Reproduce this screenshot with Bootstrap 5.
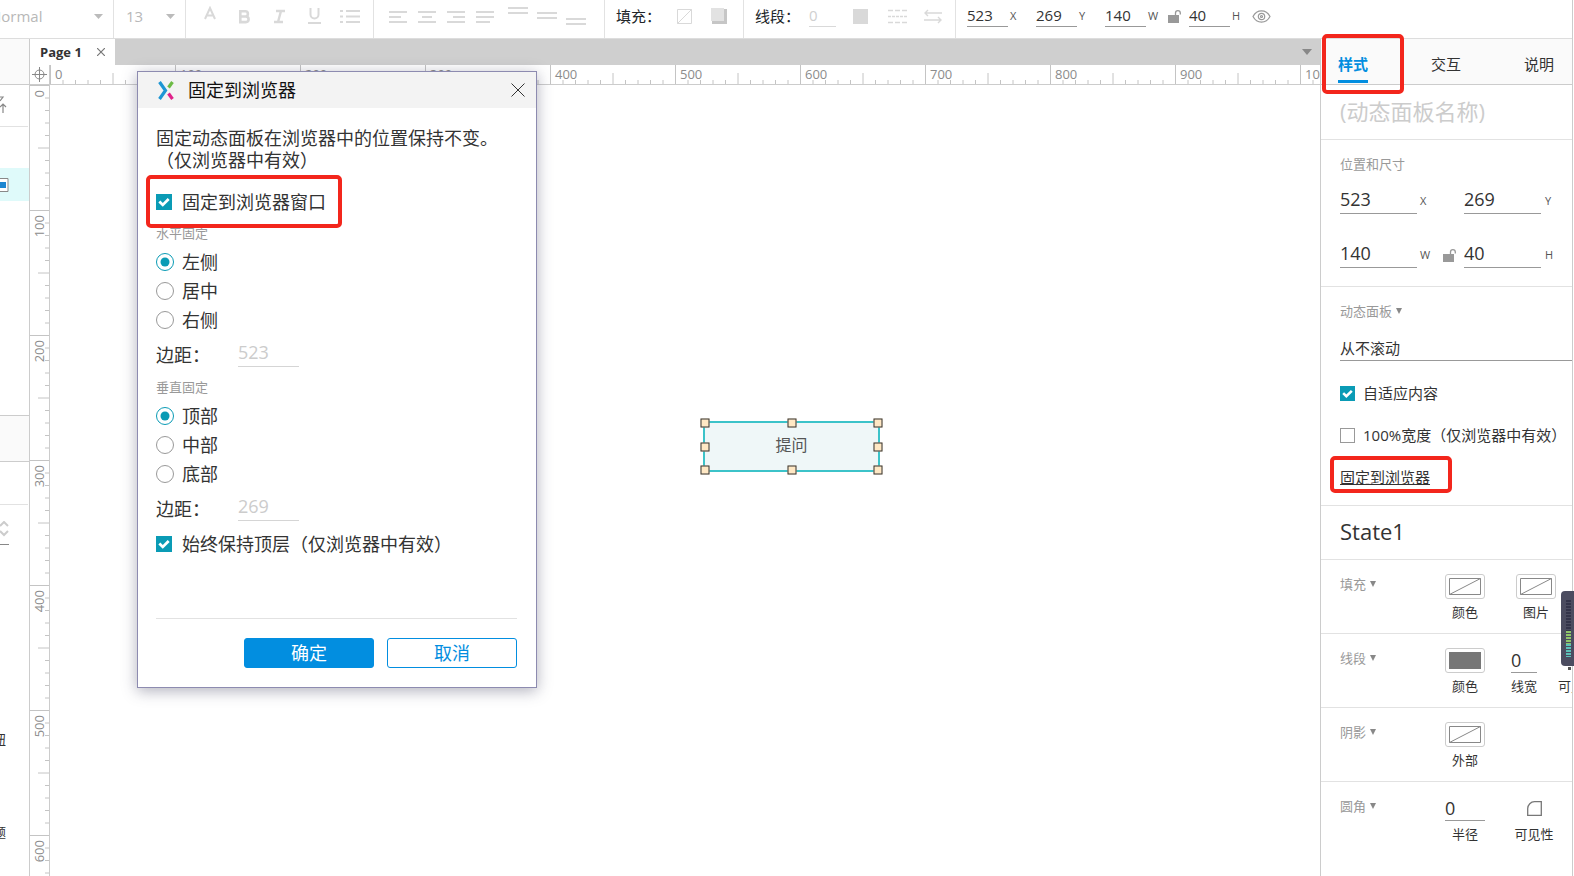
<!DOCTYPE html>
<html lang="zh-CN">
<head>
<meta charset="utf-8">
<meta name="viewport" content="width=device-width, initial-scale=1">
<title>固定到浏览器</title>
<link href="https://cdn.jsdelivr.net/npm/bootstrap@5.3.0/dist/css/bootstrap.min.css" rel="stylesheet">
<script src="https://cdn.jsdelivr.net/npm/bootstrap@5.3.0/dist/js/bootstrap.bundle.min.js" defer></script>
<style>
  :root { --teal: #0a9bb5; --blue: #028ee0; --rule: #e2e2e2; --ink: #333; --red: #f3261c; }
  body { font-family: "Open Sans", "Noto Sans CJK SC", sans-serif; font-size: 15px; line-height: 20px; color: var(--ink); background: #fff; }
  svg { display: block; }
  button.plain { border: 0; background: none; padding: 0; color: inherit; }

  /* toolbar */
  .toolbar { height: 39px; border-bottom: 1px solid #ddd; flex: none; }
  .tool-group { height: 38px; border-right: 1px solid var(--rule); padding-bottom: 6px; }
  .tool-group svg { margin: auto; }
  .dim { color: #d9d9d9; }
  .line-field { border: 0; border-bottom: 1px solid #999; border-radius: 0; background: none; padding: 0; color: var(--ink); min-width: 0; outline: 0; }
  .tool-field { width: 41px; height: 22px; padding-bottom: 2px; }
  .stroke-field { width: 27px; margin: 0 17px 0 9px; color: #d0d0d0; border-color: #d9d9d9; }
  .unit { font-size: 11px; color: #555; }
  .tool-unit { width: 28px; padding-left: 2px; flex: none; }
  .tool-unit.tight { width: 22px; }
  .w-name { width: 114px; padding-right: 10px; }
  .w-size { width: 72px; padding-left: 12px; padding-right: 10px; }
  .w-format { width: 188px; padding-left: 6px; }
  .w-align { width: 231px; padding-left: 9px; }
  .w-fill { width: 139px; padding-left: 11px; }
  .w-line { width: 212px; padding-left: 11px; }
  .w-dims { border: 0; padding-left: 11px; }
  .w-format button { width: 35px; }
  .w-align button { width: 29px; }
  .bare-select { appearance: none; border: 0; background: none; padding: 0; color: #b8b8b8; outline: 0; }
  .font-select { width: 104px; flex: none; }

  /* left strip */
  .strip { width: 30px; border-right: 1px solid #ccc; flex: none; }
  .strip-head { height: 46px; background: #fafafa; border-bottom: 1px solid #ccc; }
  .strip-tools { height: 42px; border-bottom: 1px solid var(--rule); margin-right: 1px; padding-top: 11px; }
  .strip-row { height: 33px; background: #dffafa; margin-top: 41px; padding-top: 10px; }
  .strip-mid { height: 47px; margin-top: 214px; background: #fafafa; border: solid #ccc; border-width: 1px 0; }
  .strip-field { height: 43px; border-bottom: 1px solid var(--rule); margin-right: 1px; }
  .strip-step { width: 9px; height: 40px; padding-top: 16px; border-bottom: 1px solid #888; margin-bottom: 184px; }
  .clipped { width: 6px; height: 20px; margin-bottom: 73px; font-size: 13px; }

  /* page tabs and rulers */
  .tab-bar { height: 26px; background: #cfcfcf; flex: none; }
  .page-tab { width: 85px; padding: 0 10px; background: #fff; font-size: 13px; font-weight: 700; line-height: 24px; }
  .ruler-row { height: 20px; flex: none; }
  .ruler-corner { width: 20px; border: solid #ccc; border-width: 0 1px 1px 0; flex: none; }
  .ruler-x { height: 20px; border-bottom: 1px solid #ccc; }
  .ruler-y { width: 20px; flex: none; border-right: 1px solid #ccc; }
  .ruler-label { font-size: 13px; line-height: 18px; color: #8c8c8c; flex: none; }
  .ruler-x .ruler-label { width: 125px; padding-left: 5px; }
  .ruler-y .ruler-label { height: 125px; padding-top: 5px; display: flex; align-items: flex-start; }
  .ruler-y .ruler-label span { writing-mode: vertical-rl; transform: rotate(180deg); }

  /* widget on the canvas */
  .widget { left: 653px; top: 336px; width: 177px; height: 51px; background: #eff7f8; border: 2px solid #3cc3c9; color: #555; font-size: 16px; padding-bottom: 3px; }
  .handle { width: 9px; height: 9px; background: #ffe8c4; border: 1px solid #333; }

  /* inspector */
  .inspector { width: 252px; flex: none; border-left: 1px solid #ccc; }
  .inspector-tabs { height: 46px; background: #fafafa; border-bottom: 1px solid #ccc; padding: 0 18px 0 17px; }
  .inspector-tabs button { height: 44px; padding-top: 8px; border-bottom: 3px solid transparent; }
  .inspector-tabs button.current { color: var(--blue); font-weight: 700; border-color: var(--blue); }
  .pane { border-bottom: 1px solid var(--rule); padding: 14px 0 18px 19px; }
  .pane-name { height: 55px; padding: 0 0 0 19px; }
  .pane-name input { border: 0; padding: 0; width: 100%; height: 52px; font-size: 22px; outline: 0; }
  .pane-name input::placeholder { color: #ccc; opacity: 1; }
  .pane-state { height: 54px; padding: 0 0 4px 19px; font-size: 22px; }
  .caption { font-size: 13px; color: #999; line-height: 20px; }
  .caret { width: 6px; height: 6px; }
  .field-row { margin-top: 10px; }
  .field-row + .field-row { margin-top: 24px; }
  .size-field { width: 77px; height: 30px; font-size: 18px; }
  .pane .unit { padding-top: 4px; }
  .unit-gap { width: 47px; padding-left: 3px; }
  .scroll-select { width: 100%; height: 30px; margin-top: 10px; padding-top: 4px; appearance: none; }
  .panel-opts { margin-top: 22px; gap: 22px; }
  .prop { min-height: 74px; padding: 14px 0 12px 19px; }
  .prop .caption { width: 105px; flex: none; }
  .cell { font-size: 13px; line-height: 18px; flex: none; }
  .cell-a { width: 40px; }
  .cell-b { width: 50px; }
  .cell-next { margin-left: 26px; }
  .cell-stroke { width: 26px; }
  .cell-rest { width: 14px; }
  .swatch { width: 40px; height: 25px; border: 1px solid #ccc !important; border-radius: 3px; padding: 3px !important; }
  .value-field { height: 25px; font-size: 18px; width: 100%; }
  .edge { width: 2px; flex: none; border-left: 1px solid #ccc; }

  /* check marks */
  .form-check-input { margin: 0; flex: none; border-color: #999; box-shadow: none !important; }
  .form-check-input[type=checkbox] { width: 15px; height: 15px; border-radius: 0; }
  .dialog .form-check-input[type=checkbox] { width: 16px; height: 16px; }
  .form-check-input[type=checkbox]:checked { background-color: var(--teal); border-color: var(--teal); background-image: url("data:image/svg+xml,%3csvg xmlns='http://www.w3.org/2000/svg' viewBox='0 0 15 15'%3e%3cpath fill='none' stroke='%23fff' stroke-width='3' d='M2.500 7l3.700 3.600L12.500 4.400'/%3e%3c/svg%3e"); }
  .form-check-input[type=radio] { width: 18px; height: 18px; }
  .form-check-input[type=radio]:checked { background-color: #fff; border-color: var(--teal); background-image: url("data:image/svg+xml,%3csvg xmlns='http://www.w3.org/2000/svg' viewBox='0 0 16 16'%3e%3ccircle cx='8' cy='8' r='4.500' fill='%230a9bb5'/%3e%3c/svg%3e"); }

  /* red call-out frames */
  .framed { position: relative; }
  .framed::after { content: ""; position: absolute; border: 4px solid var(--red); border-radius: 5px; pointer-events: none; z-index: 3; }
  .frame-tab::after { inset: -5px -36px -14px -16px; }
  .frame-link::after { inset: -11px -22px -6px -10px; }
  .frame-check::after { inset: -16px -16px -15px -10px; }

  /* dialog */
  .dialog { left: 137px; top: 71px; width: 400px; z-index: 5; background: #fff; border: 1px solid #8d8bb0; box-shadow: 0 3px 14px rgba(60, 60, 90, .4); font-size: 18px; line-height: 22px; }
  .dialog-head { height: 36px; background: #f3f3f3; padding: 0 11px 0 20px; gap: 14px; color: #111; }
  .dialog-body { padding: 19px 19px 19px 18px; }
  .dialog-body .caption { font-size: 13px; line-height: 18px; margin: 11px 0 9px; }
  .opt { line-height: 22px; }
  .opt-check { gap: 10px; }
  .opts { gap: 7px; }
  .margin-row { height: 24px; margin-top: 12px; }
  .margin-row label { width: 82px; }
  .margin-field { width: 61px; height: 24px; padding-bottom: 5px; color: #ccc; border-color: #d5d5d5; -webkit-text-fill-color: #ccc; }
  .dialog-foot { margin-top: 63px; padding-top: 19px; border-top: 1px solid var(--rule); gap: 13px; }
  .dialog .btn { width: 130px; height: 30px; padding: 0; font-size: 18px; line-height: 26px; border-radius: 3px; --bs-btn-border-color: var(--blue); }
  .btn-ok { --bs-btn-color: #fff; --bs-btn-bg: var(--blue); }
  .btn-no { --bs-btn-color: var(--blue); --bs-btn-bg: #fff; }

  .meter { right: 0; top: 591px; width: 13px; height: 79px; z-index: 4; }
</style>
</head>
<body class="vh-100 overflow-hidden position-relative d-flex">

<svg width="0" height="0" class="position-absolute" aria-hidden="true">
  <defs>
    <pattern id="ticksX" width="125" height="20" patternUnits="userSpaceOnUse">
      <path stroke="#c4c4c4" d="M.5 0V20M13 15V20M25.500 15V20M38 15V20M50.500 15V20M63 8V20M75.500 15V20M88 15V20M100.500 15V20M113 15V20"/>
    </pattern>
    <pattern id="ticksY" width="20" height="125" patternUnits="userSpaceOnUse">
      <path stroke="#c4c4c4" d="M0 .5H20M15 13H20M15 25.500H20M15 38H20M15 50.500H20M8 63H20M15 75.500H20M15 88H20M15 100.500H20M15 113H20"/>
    </pattern>
    <symbol id="lock" viewBox="0 0 13 15"><path fill="#999" d="M0 6h11v8H0z"/><path fill="none" stroke="#999" stroke-width="1.300" d="M7.500 7V4a2.400 2.400 0 0 1 4.800 0v1.500"/></symbol>
    <symbol id="down" viewBox="0 0 7 7"><path fill="#888" d="M0 0h7L3.500 7z"/></symbol>
    <symbol id="wide" viewBox="0 0 9 5"><path fill="#bbb" d="M0 0h9L4.500 5z"/></symbol>
    <symbol id="none" viewBox="0 0 32 17"><path fill="#fff" stroke="#888" d="M.5.5h31v16H.5zM.5 16.500L31.500.5"/></symbol>
  </defs>
</svg>

<div class="d-flex flex-column flex-grow-1 overflow-hidden">
  <header class="toolbar d-flex">
    <div class="tool-group w-name d-flex align-items-center justify-content-end overflow-hidden">
      <select class="bare-select font-select" aria-label="字体"><option>Normal</option></select>
      <svg class="m-0 flex-shrink-0" width="9" height="5"><use href="#wide"/></svg>
    </div>
    <div class="tool-group w-size d-flex align-items-center justify-content-between">
      <select class="bare-select" aria-label="字号"><option>13</option></select>
      <svg class="m-0 flex-shrink-0" width="9" height="5"><use href="#wide"/></svg>
    </div>
    <div class="tool-group w-format d-flex dim">
      <button class="plain" aria-label="文字颜色"><svg width="12" height="20" viewBox="0 0 12 20" fill="none" stroke="currentColor" stroke-width="2"><path d="M1 13L6 2l5 11M3 9.500h6"/></svg></button>
      <button class="plain" aria-label="粗体"><svg width="13" height="15" viewBox="0 0 13 15" fill="none" stroke="currentColor" stroke-width="2.600"><path d="M2.300 2.300h5a2.600 2.600 0 0 1 0 5.200h-5zM2.300 7.500h5.500a2.700 2.700 0 0 1 0 5.600H2.300z"/></svg></button>
      <button class="plain" aria-label="斜体"><svg width="13" height="15" viewBox="0 0 13 15" fill="none" stroke="currentColor" stroke-width="2.400"><path d="M3 2h9M1 13h9M8 2L5 13"/></svg></button>
      <button class="plain" aria-label="下划线"><svg width="13" height="16" viewBox="0 0 13 16" fill="none" stroke="currentColor" stroke-width="2"><path d="M2.500 0v6.500a4 4 0 0 0 8 0V0M0 15h13"/></svg></button>
      <button class="plain" aria-label="列表"><svg width="20" height="14" viewBox="0 0 20 14" fill="none" stroke="currentColor" stroke-width="2"><path d="M0 2h3M6 2h14M0 7.500h3M6 7.500h14M0 13h3M6 13h14"/></svg></button>
    </div>
    <div class="tool-group w-align d-flex dim">
      <button class="plain" aria-label="左对齐"><svg width="18" height="13" viewBox="0 0 18 13" stroke="currentColor" stroke-width="2"><path d="M0 2h18M0 7h12M0 12h18"/></svg></button>
      <button class="plain" aria-label="水平居中"><svg width="18" height="13" viewBox="0 0 18 13" stroke="currentColor" stroke-width="2"><path d="M0 2h18M4 7h10M0 12h18"/></svg></button>
      <button class="plain" aria-label="右对齐"><svg width="18" height="13" viewBox="0 0 18 13" stroke="currentColor" stroke-width="2"><path d="M0 2h18M6 7h12M0 12h18"/></svg></button>
      <button class="plain" aria-label="两端对齐"><svg width="18" height="13" viewBox="0 0 18 13" stroke="currentColor" stroke-width="2"><path d="M0 2h18M0 7h18M0 12h14"/></svg></button>
      <button class="plain ms-1" aria-label="顶部对齐"><svg width="20" height="20" viewBox="0 0 20 20" stroke="currentColor" stroke-width="2"><path d="M0 2h20M0 7h20"/></svg></button>
      <button class="plain" aria-label="垂直居中"><svg width="20" height="20" viewBox="0 0 20 20" stroke="currentColor" stroke-width="2"><path d="M0 7h20M0 12h20"/></svg></button>
      <button class="plain" aria-label="底部对齐"><svg width="20" height="20" viewBox="0 0 20 20" stroke="currentColor" stroke-width="2"><path d="M0 13h20M0 18h20"/></svg></button>
    </div>
    <div class="tool-group w-fill d-flex align-items-center dim">
      <span class="text-dark me-3">填充：</span>
      <button class="plain" aria-label="填充颜色"><svg width="15" height="15" viewBox="0 0 15 15" fill="none" stroke="currentColor"><path d="M.5.5h14v14H.5zM.5 14.500l14-14"/></svg></button>
      <button class="plain ms-auto me-3" aria-label="阴影"><svg width="16" height="16" viewBox="0 0 16 16"><path fill="#c6c6c6" d="M1 1h15v15H1z"/><path fill="#e2e2e2" d="M0 0h13v13H0z"/></svg></button>
    </div>
    <div class="tool-group w-line d-flex align-items-center dim">
      <label for="lineWidth" class="text-dark">线段：</label>
      <input id="lineWidth" class="line-field tool-field stroke-field" value="0">
      <button class="plain" aria-label="线段颜色"><svg width="15" height="15"><path fill="currentColor" d="M0 0h15v15H0z"/></svg></button>
      <button class="plain ms-3 ps-1" aria-label="线型"><svg width="20" height="15" viewBox="0 0 20 15" stroke="currentColor" stroke-width="1.500"><path stroke-dasharray="5 2" d="M0 1.500h20"/><path stroke-dasharray="3 1" d="M0 7.500h20"/><path stroke-dasharray="5 2" d="M0 13.500h20"/></svg></button>
      <button class="plain ms-3" aria-label="箭头"><svg width="18" height="15" viewBox="0 0 18 15" fill="none" stroke="currentColor" stroke-width="1.400"><path d="M18 4H1M4 1L1 4l3 3M0 11h17M14 8l3 3-3 3"/></svg></button>
    </div>
    <div class="tool-group w-dims d-flex align-items-center">
      <input class="line-field tool-field" value="523" aria-label="X"><span class="unit tool-unit">X</span>
      <input class="line-field tool-field" value="269" aria-label="Y"><span class="unit tool-unit">Y</span>
      <input class="line-field tool-field" value="140" aria-label="W"><span class="unit tool-unit tight">W</span>
      <button class="plain me-2" aria-label="锁定比例"><svg width="13" height="15"><use href="#lock"/></svg></button>
      <input class="line-field tool-field" value="40" aria-label="H"><span class="unit tool-unit tight">H</span>
      <button class="plain" aria-label="可见"><svg width="19" height="13" viewBox="0 0 19 13" fill="none" stroke="#999" stroke-width="1.200"><path d="M1 6.500C5-1 14-1 18 6.500 14 14 5 14 1 6.500z"/><circle cx="9.500" cy="6.500" r="3.200"/><circle cx="9.500" cy="6.500" r="1"/></svg></button>
    </div>
  </header>

  <div class="d-flex flex-grow-1">
    <aside class="strip">
      <div class="strip-head"></div>
      <div class="strip-tools"><svg width="7" height="18" viewBox="0 0 7 18" fill="none" stroke="#888" stroke-width="1.200"><path d="M0 1h3L0 5M3 17V8M0 11l3-3 3 3"/></svg></div>
      <div class="strip-row"><svg width="9" height="14" viewBox="0 0 9 14"><path fill="#fff" stroke="#888" d="M-1 .5h9v13h-9z"/><path fill="#1c86d1" d="M0 4h6v6H0z"/></svg></div>
      <div class="strip-mid"></div>
      <div class="strip-field"></div>
      <div class="strip-step"><svg width="9" height="16" viewBox="0 0 9 16" fill="none" stroke="#ccc" stroke-width="2"><path d="M0 5l4-4 4 4M0 10l4 4 4-4"/></svg></div>
      <div class="clipped d-flex justify-content-end overflow-hidden"><span class="flex-shrink-0">钮</span></div>
      <div class="clipped d-flex justify-content-end overflow-hidden mb-0"><span class="flex-shrink-0">题</span></div>
    </aside>

    <main class="d-flex flex-column flex-grow-1 overflow-hidden">
      <div class="tab-bar d-flex align-items-center">
        <div class="page-tab d-flex justify-content-between align-items-center align-self-stretch">
          <span>Page 1</span>
          <button class="plain" aria-label="关闭页面"><svg width="8" height="8" viewBox="0 0 8 8" stroke="#777" stroke-width="1.200"><path d="M0 0l8 8M8 0L0 8"/></svg></button>
        </div>
        <button class="plain ms-auto me-2" aria-label="页面列表"><svg width="10" height="6" viewBox="0 0 10 6"><path fill="#888" d="M0 0h10L5 6z"/></svg></button>
      </div>
      <div class="ruler-row d-flex">
        <div class="ruler-corner d-flex align-items-center justify-content-center"><svg width="15" height="15" viewBox="0 0 15 15" fill="none" stroke="#888"><circle cx="7.500" cy="7.500" r="4.500"/><path d="M7.500 0v15M0 7.500h15"/></svg></div>
        <div class="ruler-x flex-grow-1 d-flex overflow-hidden position-relative">
          <svg class="position-absolute w-100 h-100" aria-hidden="true"><rect width="100%" height="20" fill="url(#ticksX)"/></svg>
          <span class="ruler-label">0</span><span class="ruler-label">100</span><span class="ruler-label">200</span><span class="ruler-label">300</span><span class="ruler-label">400</span><span class="ruler-label">500</span><span class="ruler-label">600</span><span class="ruler-label">700</span><span class="ruler-label">800</span><span class="ruler-label">900</span><span class="ruler-label">1000</span>
        </div>
      </div>
      <div class="d-flex flex-grow-1 overflow-hidden">
        <div class="ruler-y position-relative overflow-hidden">
          <svg class="position-absolute w-100 h-100" aria-hidden="true"><rect width="20" height="100%" fill="url(#ticksY)"/></svg>
          <div class="ruler-label"><span>0</span></div><div class="ruler-label"><span>100</span></div><div class="ruler-label"><span>200</span></div><div class="ruler-label"><span>300</span></div><div class="ruler-label"><span>400</span></div><div class="ruler-label"><span>500</span></div><div class="ruler-label"><span>600</span></div>
        </div>
        <div class="flex-grow-1 position-relative">
          <div class="widget position-absolute d-flex align-items-center justify-content-center">提问
            <i class="handle position-absolute top-0 start-0 translate-middle"></i><i class="handle position-absolute top-0 start-50 translate-middle"></i><i class="handle position-absolute top-0 start-100 translate-middle"></i>
            <i class="handle position-absolute top-50 start-0 translate-middle"></i><i class="handle position-absolute top-50 start-100 translate-middle"></i>
            <i class="handle position-absolute top-100 start-0 translate-middle"></i><i class="handle position-absolute top-100 start-50 translate-middle"></i><i class="handle position-absolute top-100 start-100 translate-middle"></i>
          </div>
        </div>
      </div>
    </main>

    <aside class="inspector">
      <nav class="inspector-tabs d-flex justify-content-between align-items-start">
        <button class="plain current framed frame-tab">样式</button>
        <button class="plain">交互</button>
        <button class="plain">说明</button>
      </nav>
      <div class="pane pane-name"><input placeholder="(动态面板名称)" aria-label="动态面板名称"></div>
      <section class="pane">
        <div class="caption">位置和尺寸</div>
        <div class="field-row d-flex align-items-center">
          <input class="line-field size-field" value="523" aria-label="X 坐标"><span class="unit unit-gap">X</span>
          <input class="line-field size-field" value="269" aria-label="Y 坐标"><span class="unit ps-1">Y</span>
        </div>
        <div class="field-row d-flex align-items-center">
          <input class="line-field size-field" value="140" aria-label="宽"><span class="unit unit-gap d-flex align-items-center justify-content-between pe-2">W <svg width="13" height="15"><use href="#lock"/></svg></span>
          <input class="line-field size-field" value="40" aria-label="高"><span class="unit ps-1">H</span>
        </div>
      </section>
      <section class="pane">
        <div class="caption d-flex align-items-center gap-1">动态面板 <svg class="caret"><use href="#down"/></svg></div>
        <select class="line-field scroll-select d-block" aria-label="滚动"><option>从不滚动</option></select>
        <div class="panel-opts d-flex flex-column align-items-start">
          <label class="d-flex align-items-center gap-2"><input type="checkbox" class="form-check-input" checked>自适应内容</label>
          <label class="d-flex align-items-center gap-2 text-nowrap"><input type="checkbox" class="form-check-input">100%宽度（仅浏览器中有效）</label>
          <a href="#" class="framed frame-link text-reset">固定到浏览器</a>
        </div>
      </section>
      <div class="pane pane-state d-flex align-items-center">State1</div>
      <section class="pane prop d-flex overflow-hidden">
        <div class="caption d-flex align-items-center align-self-start gap-1">填充 <svg class="caret"><use href="#down"/></svg></div>
        <div class="cell cell-a text-center"><button class="plain swatch mb-1" aria-label="颜色"><svg width="32" height="17"><use href="#none"/></svg></button><div>颜色</div></div>
        <div class="cell cell-b cell-next text-center"><button class="plain swatch mb-1" aria-label="图片"><svg width="32" height="17"><use href="#none"/></svg></button><div>图片</div></div>
      </section>
      <section class="pane prop d-flex overflow-hidden">
        <div class="caption d-flex align-items-center align-self-start gap-1">线段 <svg class="caret"><use href="#down"/></svg></div>
        <div class="cell cell-a text-center"><button class="plain swatch mb-1" aria-label="颜色"><svg width="32" height="17"><path fill="#777" d="M0 0h32v17H0z"/></svg></button><div>颜色</div></div>
        <div class="cell cell-stroke cell-next"><input id="stroke" class="line-field value-field d-block mb-1" value="0"><label for="stroke">线宽</label></div>
        <div class="cell cell-rest ms-auto d-flex align-items-end overflow-hidden"><span class="text-nowrap">可见性</span></div>
      </section>
      <section class="pane prop d-flex">
        <div class="caption d-flex align-items-center align-self-start gap-1">阴影 <svg class="caret"><use href="#down"/></svg></div>
        <div class="cell cell-a text-center"><button class="plain swatch mb-1" aria-label="外部"><svg width="32" height="17"><use href="#none"/></svg></button><div>外部</div></div>
      </section>
      <section class="prop d-flex">
        <div class="caption d-flex align-items-center align-self-start gap-1">圆角 <svg class="caret"><use href="#down"/></svg></div>
        <div class="cell cell-a text-center"><input id="radius" class="line-field value-field d-block mb-1" value="0"><label for="radius">半径</label></div>
        <div class="cell cell-b ms-4 text-center"><button class="plain value-field mb-1" aria-label="可见性"><svg class="mx-auto" width="15" height="15" viewBox="0 0 15 15" fill="none" stroke="#777" stroke-width="1.300"><path d="M.7 14.300V7.500A7 7 0 0 1 7.500.7h6.800v13.600z"/></svg></button><div>可见性</div></div>
      </section>
    </aside>
  </div>
</div>
<div class="edge"></div>

<div class="meter position-absolute">
  <svg width="13" height="79" viewBox="0 0 13 79"><path fill="#4b4c60" d="M13 0H4a4 4 0 0 0-4 4v67a4 4 0 0 0 4 4h9z"/><path stroke="#33344a" stroke-width="5" stroke-dasharray="2 1" d="M7.500 9V40"/><path stroke="#8fc46a" stroke-width="5" stroke-dasharray="2 1" d="M7.500 40V53"/><path stroke="#5cc0b8" stroke-width="5" stroke-dasharray="2 1" d="M7.500 53V66"/><path fill="#555" d="M7 76h3v3H7z"/></svg>
</div>

<div class="dialog position-absolute" role="dialog" aria-labelledby="dlgTitle">
  <div class="dialog-head d-flex align-items-center">
    <svg width="16" height="19" viewBox="0 0 16 19" fill="none" stroke-width="3.200"><path stroke="#1e96d4" d="M1.500 1L7.500 9.500 1.500 18"/><path stroke="#6dbb45" d="M14.500 1L10.500 6.500"/><path stroke="#e0218a" d="M10.500 12.500l4 5.500"/></svg>
    <span id="dlgTitle">固定到浏览器</span>
    <button class="plain ms-auto" aria-label="关闭"><svg width="14" height="14" viewBox="0 0 14 14" stroke="#333"><path d="M.5.5l13 13M13.500.5l-13 13"/></svg></button>
  </div>
  <div class="dialog-body">
    <div class="text-nowrap">固定动态面板在浏览器中的位置保持不变。<br>（仅浏览器中有效）</div>
    <div class="d-flex mt-3 pt-1"><label class="opt opt-check framed frame-check d-flex align-items-center"><input type="checkbox" class="form-check-input" checked>固定到浏览器窗口</label></div>
    <div class="caption">水平固定</div>
    <div class="opts d-flex flex-column align-items-start">
      <label class="opt d-flex align-items-center gap-2"><input type="radio" name="h" class="form-check-input" checked>左侧</label>
      <label class="opt d-flex align-items-center gap-2"><input type="radio" name="h" class="form-check-input">居中</label>
      <label class="opt d-flex align-items-center gap-2"><input type="radio" name="h" class="form-check-input">右侧</label>
    </div>
    <div class="margin-row d-flex align-items-center"><label for="mh">边距：</label><input id="mh" class="line-field margin-field" value="523" disabled></div>
    <div class="caption">垂直固定</div>
    <div class="opts d-flex flex-column align-items-start">
      <label class="opt d-flex align-items-center gap-2"><input type="radio" name="v" class="form-check-input" checked>顶部</label>
      <label class="opt d-flex align-items-center gap-2"><input type="radio" name="v" class="form-check-input">中部</label>
      <label class="opt d-flex align-items-center gap-2"><input type="radio" name="v" class="form-check-input">底部</label>
    </div>
    <div class="margin-row d-flex align-items-center"><label for="mv">边距：</label><input id="mv" class="line-field margin-field" value="269" disabled></div>
    <label class="opt opt-check d-flex align-items-center mt-2 pt-1"><input type="checkbox" class="form-check-input" checked>始终保持顶层（仅浏览器中有效）</label>
    <div class="dialog-foot d-flex justify-content-end">
      <button class="btn btn-ok">确定</button>
      <button class="btn btn-no">取消</button>
    </div>
  </div>
</div>
</body>
</html>
